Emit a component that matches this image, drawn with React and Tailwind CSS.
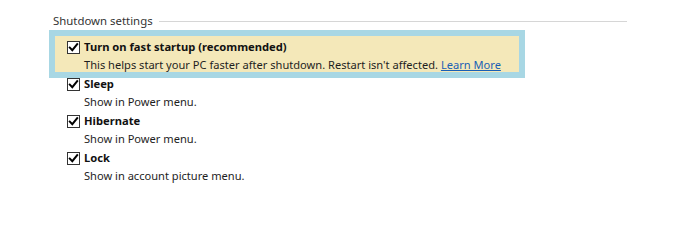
import { memo } from "react";

const CheckBox = () => (
  <span className="flex h-[13px] w-[13px] shrink-0 items-center justify-center border border-[#333] bg-white">
    <svg className="h-[11px] w-[11px]" viewBox="0 0 11 11" fill="none">
      <path
        d="M1.8 5.6 L4.3 8.2 L9.2 2.2"
        stroke="#000"
        strokeWidth="2"
        strokeLinecap="square"
      />
    </svg>
  </span>
);

const Option = memo(({ label, children, highlight }) => (
  <div className={highlight ? "relative z-10" : ""}>
    {highlight && (
      <div className="absolute left-[-18px] top-[-8px] -z-10 h-[48px] w-[476px] border-[6px] border-[#a8d7e4] bg-[#f4e8b9]" />
    )}
    <div className="flex h-[18px] items-center gap-[4px]">
      <CheckBox />
      <span className="text-[11.2px] font-bold text-[#111]">{label}</span>
    </div>
    <div className="h-[18px] pl-[17px] leading-[18px] text-[#1e1e1e]">
      {children}
    </div>
  </div>
));

Option.displayName = "Option";

export default function App() {
  return (
    <div
      className="h-[240px] w-[685px] overflow-hidden bg-white pl-[53px] pt-[12px] text-[11.1px] leading-[18px]"
      style={{ fontFamily: '"Noto Sans", "Open Sans", sans-serif' }}
    >
      <div className="flex h-[18px] items-center gap-[6px] pr-[58px]">
        <span className="text-[11.4px] text-[#333]">Shutdown settings</span>
        <div className="h-px flex-1 bg-[#d6d6d6]" />
      </div>

      <div className="mt-[8px] flex flex-col gap-[1px] pl-[14px]">
        <Option label="Turn on fast startup (recommended)" highlight>
          This helps start your PC faster after shutdown. Restart isn't
          affected.{" "}
          <a href="#" className="text-[#1a5fb4] underline">
            Learn More
          </a>
        </Option>
        <Option label="Sleep">Show in Power menu.</Option>
        <Option label="Hibernate">Show in Power menu.</Option>
        <Option label="Lock">Show in account picture menu.</Option>
      </div>
    </div>
  );
}
